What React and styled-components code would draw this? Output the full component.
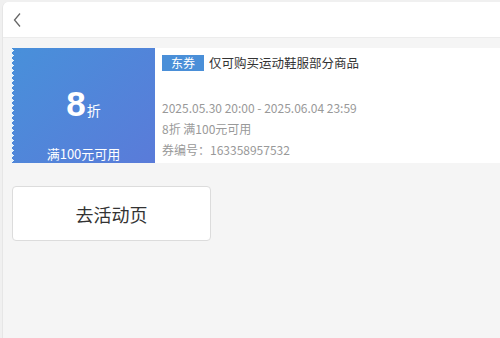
import React from 'react'
import styled, { createGlobalStyle } from 'styled-components'

const Global = createGlobalStyle`
  html, body {
    margin: 0;
    padding: 0;
    background: #f0f0f0;
    font-family: "Microsoft YaHei", "Noto Sans CJK SC", "Liberation Sans", sans-serif;
  }
`

const Frame = styled.div`
  margin-left: 2px;
  margin-top: 2px;
  height: 336px;
  background: #f5f5f5;
  border-left: 1px solid #e6e6e6;
  border-top-left-radius: 6px;
  overflow: hidden;
`

const Header = styled.div`
  height: 35px;
  background: #fff;
  display: flex;
  align-items: center;
  padding-left: 10px;
  border-bottom: 1px solid #ececec;
`

const Body = styled.div`
  padding: 10px 0 0 9px;
  display: flex;
  flex-direction: column;
  gap: 23px;
`

const Card = styled.div`
  display: flex;
  height: 115px;
  background: #fff;
`

const Left = styled.div`
  position: relative;
  width: 143px;
  flex-shrink: 0;
  background: linear-gradient(135deg, #4890da 0%, #5a7bd9 100%);
  color: #fff;
  display: flex;
  flex-direction: column;
  align-items: center;
  &::before {
    content: '';
    position: absolute;
    left: -2px;
    top: 0;
    bottom: 0;
    width: 5px;
    background: radial-gradient(circle at 2px 2.5px, #e8f4fb 1.6px, transparent 1.8px);
    background-size: 5px 5px;
  }
`

const Amount = styled.div`
  margin-top: 39px;
  display: flex;
  align-items: baseline;
  font-family: "Liberation Sans", "Noto Sans CJK SC", sans-serif;
  font-weight: bold;
  font-size: 35px;
  line-height: 34px;
  span {
    font-family: "Noto Sans CJK SC", sans-serif;
    font-weight: normal;
    font-size: 14px;
    margin-left: 1px;
  }
`

const Cond = styled.div`
  margin-top: auto;
  font-size: 13px;
  line-height: 18px;
  font-family: "Noto Sans CJK SC", sans-serif;
`

const Right = styled.div`
  flex: 1;
  padding: 5px 0 0 7px;
  display: flex;
  flex-direction: column;
`

const TitleRow = styled.div`
  display: flex;
  align-items: center;
  gap: 5px;
`

const Tag = styled.span`
  background: #4a8fd8;
  color: #fff;
  font-size: 12px;
  line-height: 16px;
  padding: 0 9px;
  font-family: "Noto Sans CJK SC", sans-serif;
`

const Title = styled.span`
  font-size: 12.5px;
  color: #333;
  font-family: "Noto Sans CJK SC", sans-serif;
`

const Info = styled.div`
  margin-top: ${p => p.$top || 0}px;
  font-size: 12px;
  line-height: 21px;
  color: #999;
  font-family: "Noto Sans CJK SC", "Liberation Sans", sans-serif;
`

const Button = styled.button`
  width: 199px;
  height: 55px;
  background: #fff;
  border: 1px solid #dcdcdc;
  border-radius: 4px;
  font-size: 18px;
  color: #333;
  font-family: "Noto Sans CJK SC", sans-serif;
  padding: 0;
`

export default function App() {
  return (
    <>
      <Global />
      <Frame>
        <Header>
          <svg width="10" height="16" viewBox="0 0 10 16">
            <path d="M7 1.5 L1.5 8 L7 14.5" fill="none" stroke="#666" strokeWidth="1.3" />
          </svg>
        </Header>
        <Body>
          <Card>
            <Left>
              <Amount>8<span>折</span></Amount>
              <Cond>满100元可用</Cond>
            </Left>
            <Right>
              <TitleRow>
                <Tag>东券</Tag>
                <Title>仅可购买运动鞋服部分商品</Title>
              </TitleRow>
              <Info $top={25}>2025.05.30 20:00 - 2025.06.04 23:59</Info>
              <Info>8折 满100元可用</Info>
              <Info>券编号：163358957532</Info>
            </Right>
          </Card>
          <Button>去活动页</Button>
        </Body>
      </Frame>
    </>
  )
}
